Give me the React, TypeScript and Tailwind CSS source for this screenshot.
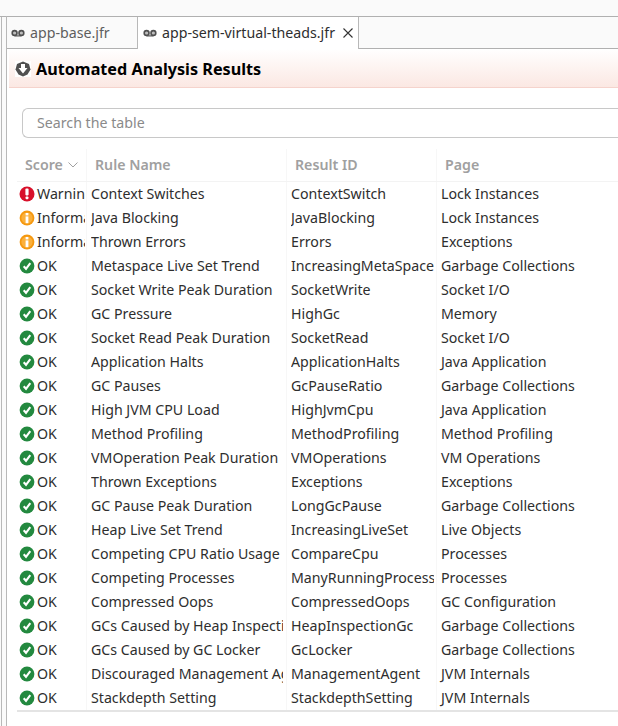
const rows: [string, string, string, string][] = [
  ["Warning", "Context Switches", "ContextSwitch", "Lock Instances"],
  ["Information", "Java Blocking", "JavaBlocking", "Lock Instances"],
  ["Information", "Thrown Errors", "Errors", "Exceptions"],
  ["OK", "Metaspace Live Set Trend", "IncreasingMetaSpace", "Garbage Collections"],
  ["OK", "Socket Write Peak Duration", "SocketWrite", "Socket I/O"],
  ["OK", "GC Pressure", "HighGc", "Memory"],
  ["OK", "Socket Read Peak Duration", "SocketRead", "Socket I/O"],
  ["OK", "Application Halts", "ApplicationHalts", "Java Application"],
  ["OK", "GC Pauses", "GcPauseRatio", "Garbage Collections"],
  ["OK", "High JVM CPU Load", "HighJvmCpu", "Java Application"],
  ["OK", "Method Profiling", "MethodProfiling", "Method Profiling"],
  ["OK", "VMOperation Peak Duration", "VMOperations", "VM Operations"],
  ["OK", "Thrown Exceptions", "Exceptions", "Exceptions"],
  ["OK", "GC Pause Peak Duration", "LongGcPause", "Garbage Collections"],
  ["OK", "Heap Live Set Trend", "IncreasingLiveSet", "Live Objects"],
  ["OK", "Competing CPU Ratio Usage", "CompareCpu", "Processes"],
  ["OK", "Competing Processes", "ManyRunningProcesses", "Processes"],
  ["OK", "Compressed Oops", "CompressedOops", "GC Configuration"],
  ["OK", "GCs Caused by Heap Inspection", "HeapInspectionGc", "Garbage Collections"],
  ["OK", "GCs Caused by GC Locker", "GcLocker", "Garbage Collections"],
  ["OK", "Discouraged Management Agent", "ManagementAgent", "JVM Internals"],
  ["OK", "Stackdepth Setting", "StackdepthSetting", "JVM Internals"],
];

function ScoreIcon({ score }: { score: string }) {
  if (score === "OK")
    return (
      <svg width="16" height="16" viewBox="0 0 16 16" className="shrink-0">
        <circle cx="8" cy="8" r="7.4" fill="#23893f" />
        <path d="M4.7 8.3 7 10.8 11.3 5.1" fill="none" stroke="#fff" strokeWidth="2.1" />
      </svg>
    );
  if (score === "Warning")
    return (
      <svg width="16" height="16" viewBox="0 0 16 16" className="shrink-0">
        <circle cx="8" cy="8" r="7.5" fill="#d8102a" />
        <rect x="6.4" y="2.6" width="3.2" height="6.8" rx="0.8" fill="#fff" />
        <rect x="6.6" y="10.4" width="2.8" height="2.8" rx="0.8" fill="#fff" />
      </svg>
    );
  return (
    <svg width="16" height="16" viewBox="0 0 16 16" className="shrink-0">
      <circle cx="8" cy="8" r="7.4" fill="#f5980f" />
      <circle cx="8" cy="8" r="5.6" fill="#fbb03b" />
      <rect x="6.6" y="3" width="2.8" height="2.4" fill="#fff" />
      <rect x="6.6" y="6.4" width="2.8" height="6.8" fill="#fff" />
    </svg>
  );
}

function TapeIcon() {
  return (
    <svg width="14" height="8" viewBox="0 0 14 8" className="shrink-0">
      <path d="M3.5 6.9H10.5" stroke="#555" strokeWidth="1.2" />
      <circle cx="3.6" cy="4" r="2.4" fill="#bdbdbd" stroke="#505050" strokeWidth="1.6" />
      <circle cx="10.4" cy="4" r="2.4" fill="#bdbdbd" stroke="#505050" strokeWidth="1.6" />
    </svg>
  );
}

export default function App() {
  return (
    <div className="w-[618px] h-[726px] overflow-hidden bg-white text-[14.2px] text-[#2e2e2e] font-['Noto_Sans','Open_Sans',sans-serif]">
      <div className="h-4 bg-[#fafafa]" />
      <div className="flex h-[710px]">
        <div className="w-[6px] shrink-0 flex bg-[#fafafa] border-t border-[#b0b0b0]">
          <div className="w-px ml-px bg-[#b8b8b8]" />
        </div>
        <div className="flex-1 min-w-0 flex flex-col border-l border-[#b8b8b8]">
          <div className="flex h-[33px] shrink-0 bg-[#fafafa] border-t border-[#b0b0b0]">
            <div className="w-[130px] h-[32px] flex items-center gap-[5px] pl-1 border-b border-[#b0b0b0] text-[#5e5e5e]">
              <TapeIcon />
              <span>app-base.jfr</span>
            </div>
            <div className="w-[222px] flex items-center gap-[5px] pl-[5px] bg-white border-x border-[#b8b8b8]">
              <TapeIcon />
              <span className="whitespace-nowrap">app-sem-virtual-theads.jfr</span>
              <svg width="10" height="10" viewBox="0 0 10 10" className="ml-[3px] shrink-0">
                <path d="M.5.5l9 9M9.5.5l-9 9" stroke="#333" strokeWidth="1.1" />
              </svg>
            </div>
            <div className="flex-1 h-[32px] border-b border-[#b0b0b0]" />
          </div>
          <div className="h-[39px] ml-[2px] shrink-0 flex items-center gap-[5px] pl-[6px] pt-[2px] bg-gradient-to-b from-white to-[#fbe8e3] border-b border-[#f5d3cc]">
            <svg width="16" height="16" viewBox="0 0 16 16" className="shrink-0 bg-white">
              <path d="M8 .5 14 3 15.500 8.500 12.500 13.500 8 15.500 3.500 13.500 .5 8.500 2 3z" fill="#505050" />
              <path d="M6 3h4v4h2.500L8 12.500 3.500 7H6z" fill="#fff" />
            </svg>
            <span className="font-bold text-[16.2px] text-black whitespace-nowrap">Automated Analysis Results</span>
          </div>
          <div className="pl-[15px] pt-5">
            <div className="h-[30px] flex items-center pl-[14px] border border-r-0 border-[#c8c8c8] rounded-l-md text-[#8a8a8a]">
              Search the table
            </div>
          </div>
          <div className="ml-[10px] mt-[11px] flex-1">
            <div className="grid grid-cols-[70px_200px_150px_1fr] h-[33px] border-b border-[#f3f3f3] font-semibold text-[#a0a0a0]">
              <div className="flex items-center gap-[5px] pl-2 border-r border-[#f7f7f7]">
                Score
                <svg width="10" height="6" viewBox="0 0 10 6">
                  <path d="M.5.5 5 5 9.5.5" fill="none" stroke="#a0a0a0" />
                </svg>
              </div>
              <div className="flex items-center pl-2 border-r border-[#f7f7f7]">Rule Name</div>
              <div className="flex items-center pl-2 border-r border-[#f7f7f7]">Result ID</div>
              <div className="flex items-center pl-2">Page</div>
            </div>
            <div className="border-b-2 border-[#e4e4e4]">
              {rows.map((r) => (
                <div key={r[1]} className="grid grid-cols-[70px_200px_150px_1fr] h-6 whitespace-nowrap">
                  <div className="border-r border-[#f7f7f7] pr-px">
                    <div className="h-full flex items-center gap-[2px] pl-[2px] overflow-hidden">
                      <ScoreIcon score={r[0]} />
                      <span>{r[0]}</span>
                    </div>
                  </div>
                  <div className="flex items-center pl-1 pr-[3px] border-r border-[#f7f7f7]">
                    <span className="block w-full overflow-hidden">{r[1]}</span>
                  </div>
                  <div className="flex items-center pl-1 pr-[2px] border-r border-[#f7f7f7]">
                    <span className="block w-full overflow-hidden">{r[2]}</span>
                  </div>
                  <div className="flex items-center pl-1">{r[3]}</div>
                </div>
              ))}
            </div>
          </div>
        </div>
      </div>
    </div>
  );
}
